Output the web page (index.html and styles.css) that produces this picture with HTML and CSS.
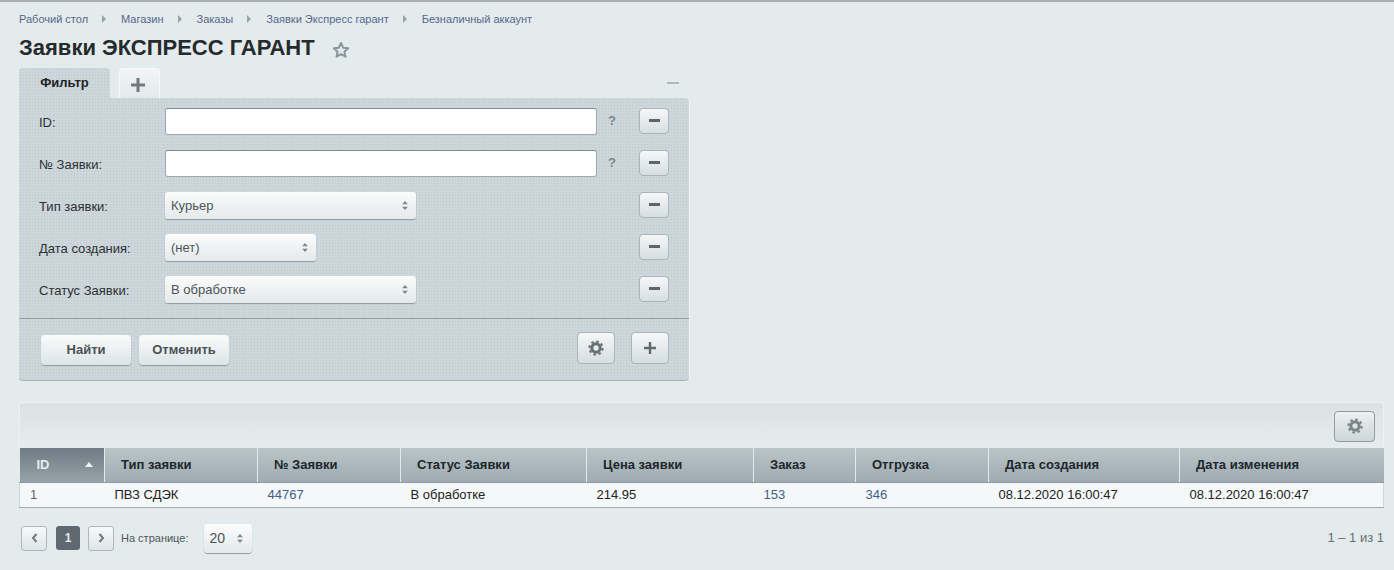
FILE: index.html
```html
<!DOCTYPE html>
<html lang="ru">
<head>
  <meta charset="UTF-8"/>
  <title>Заявки ЭКСПРЕСС ГАРАНТ</title>
  <link rel="stylesheet" href="styles.css">
</head>
<body>
  <nav class="crumbs">
    <a>Рабочий стол</a><i class="sep"></i>
    <a>Магазин</a><i class="sep"></i>
    <a>Заказы</a><i class="sep"></i>
    <a>Заявки Экспресс гарант</a><i class="sep"></i>
    <a>Безналичный аккаунт</a>
  </nav>

  <div class="title-row">
    <h1>Заявки ЭКСПРЕСС ГАРАНТ</h1>
    <svg class="star" width="18" height="18" viewBox="0 0 18 18"><path d="M9 2l2.1 4.7 5.1.6-3.8 3.4 1.1 5L9 13.2l-4.5 2.5 1.1-5-3.8-3.4 5.1-.6z" fill="none" stroke="#8a959c" stroke-width="2" stroke-linejoin="round"/></svg>
  </div>

  <section class="filter">
    <div class="tabs">
      <div class="tab tab-active">Фильтр</div>
      <div class="tab tab-add"><svg width="14" height="14" viewBox="0 0 14 14"><path d="M7 0v14M0 7h14" stroke="#6d7a80" stroke-width="3"/></svg></div>
      <div class="collapse"></div>
    </div>
    <div class="panel">
      <div class="rows">
        <div class="row">
          <label>ID:</label>
          <input class="text" type="text">
          <span class="hint">?</span>
          <button class="square"><b class="dash"></b></button>
        </div>
        <div class="row">
          <label>№ Заявки:</label>
          <input class="text" type="text">
          <span class="hint">?</span>
          <button class="square"><b class="dash"></b></button>
        </div>
        <div class="row">
          <label>Тип заявки:</label>
          <div class="select w-wide"><span>Курьер</span><svg width="6" height="9" viewBox="0 0 7 11"><path d="M3.5 0L7 4H0zM3.5 11L0 7h7z" fill="#7d878c"/></svg></div>
          <button class="square push"><b class="dash"></b></button>
        </div>
        <div class="row">
          <label>Дата создания:</label>
          <div class="select w-mid"><span>(нет)</span><svg width="6" height="9" viewBox="0 0 7 11"><path d="M3.5 0L7 4H0zM3.5 11L0 7h7z" fill="#7d878c"/></svg></div>
          <button class="square push"><b class="dash"></b></button>
        </div>
        <div class="row">
          <label>Статус Заявки:</label>
          <div class="select w-wide"><span>В обработке</span><svg width="6" height="9" viewBox="0 0 7 11"><path d="M3.5 0L7 4H0zM3.5 11L0 7h7z" fill="#7d878c"/></svg></div>
          <button class="square push"><b class="dash"></b></button>
        </div>
      </div>
      <div class="actions">
        <button class="btn btn-find">Найти</button>
        <button class="btn btn-cancel">Отменить</button>
        <button class="icon-btn push">
          <svg width="16" height="16" viewBox="0 0 16 16"><circle cx="8" cy="8" r="4.2" fill="none" stroke="#666f74" stroke-width="3"/><circle cx="8" cy="8" r="6.6" fill="none" stroke="#666f74" stroke-width="2" stroke-dasharray="2.6 2.58"/></svg>
        </button>
        <button class="icon-btn">
          <svg width="14" height="14" viewBox="0 0 14 14"><path d="M7 1v12M1 7h12" stroke="#5f6a70" stroke-width="2.4"/></svg>
        </button>
      </div>
    </div>
  </section>

  <section class="grid">
    <div class="toolbar">
      <button class="icon-btn gear-wide">
        <svg width="16" height="16" viewBox="0 0 16 16"><circle cx="8" cy="8" r="4.2" fill="none" stroke="#7a8388" stroke-width="3"/><circle cx="8" cy="8" r="6.6" fill="none" stroke="#7a8388" stroke-width="2" stroke-dasharray="2.6 2.58"/></svg>
      </button>
    </div>
    <table>
      <colgroup>
        <col class="c1"><col class="c2"><col class="c3"><col class="c4"><col class="c5"><col class="c6"><col class="c7"><col class="c8"><col>
      </colgroup>
      <thead>
        <tr>
          <th class="sorted"><div class="sort-cell"><span>ID</span><i class="arrow"></i></div></th>
          <th>Тип заявки</th>
          <th>№ Заявки</th>
          <th>Статус Заявки</th>
          <th>Цена заявки</th>
          <th>Заказ</th>
          <th>Отгрузка</th>
          <th>Дата создания</th>
          <th>Дата изменения</th>
        </tr>
      </thead>
      <tbody>
        <tr>
          <td class="num">1</td>
          <td>ПВЗ СДЭК</td>
          <td><a>44767</a></td>
          <td>В обработке</td>
          <td>214.95</td>
          <td><a>153</a></td>
          <td><a>346</a></td>
          <td>08.12.2020 16:00:47</td>
          <td>08.12.2020 16:00:47</td>
        </tr>
      </tbody>
    </table>
  </section>

  <footer class="pager">
    <button class="page-btn"><svg width="7" height="10" viewBox="0 0 7 10"><path d="M5.5 1L2 5l3.5 4" fill="none" stroke="#6f7a80" stroke-width="2"/></svg></button>
    <span class="page-cur">1</span>
    <button class="page-btn"><svg width="7" height="10" viewBox="0 0 7 10"><path d="M1.5 1L5 5 1.5 9" fill="none" stroke="#6f7a80" stroke-width="2"/></svg></button>
    <span class="per-label">На странице:</span>
    <div class="select per-select"><span>20</span><svg width="6" height="9" viewBox="0 0 7 11"><path d="M3.5 0L7 4H0zM3.5 11L0 7h7z" fill="#7d878c"/></svg></div>
    <span class="total">1 – 1 из 1</span>
  </footer>
</body>
</html>
```

FILE: styles.css
```css
* { box-sizing:border-box; margin:0; padding:0 }
html, body { height:100% }
body {
  font-family:'Liberation Sans', Arial, sans-serif;
  font-size:13px; color:#222;
  background:#e4ebed;
  border-top:2px solid #a6aeb1;
  padding:0 10px 0 19px;
  overflow:hidden;
}
button { font-family:inherit; cursor:pointer }

.crumbs { display:flex; align-items:center; height:14px; margin-top:10px; font-size:11px; color:#54688c; white-space:nowrap }
.sep { width:0; height:0; margin:0 15px 0 14px; border-left:4px solid #97a2a8; border-top:4px solid transparent; border-bottom:4px solid transparent }

.title-row { display:flex; align-items:center; gap:17px; height:28px; margin-top:8px }
h1 { font-size:22px; line-height:28px; font-weight:bold; color:#252a2d }
.star { margin-top:3px }

.filter { width:670px; margin-top:6px }
.tabs { display:flex; height:30px; position:relative }
.tab { border-radius:4px 4px 0 0; display:flex; align-items:center; justify-content:center }
.tab-active {
  width:91px; font-size:13px; font-weight:bold; color:#222; padding-bottom:2px;
  background:#cdd6da radial-gradient(#bdc7cb 35%, transparent 40%) 0 0/3px 3px;
}
.tab-add {
  width:41px; margin-left:9px; padding:2px 3px 0 0;
  background:linear-gradient(#f2f5f6, #e3e9eb);
  border:1px solid #f6f8f9; border-bottom:none;
}
.collapse { width:12px; height:2px; background:#afb8bc; margin:14px 10px 0 auto; }

.panel {
  height:283px; border-radius:0 4px 4px 4px;
  background:#cdd6da radial-gradient(#bdc7cb 35%, transparent 40%) 0 0/3px 3px;
  border-bottom:1px solid #aab3b7;
  box-shadow:1px 0 0 #f0f4f5;
}
.rows { height:221px; padding-top:10px; border-bottom:1px solid #929da2 }
.row { display:flex; align-items:center; height:27px; margin-bottom:15px; padding:0 20px }
.row label { width:126px; padding-top:2px; font-size:13px; color:#2c3033 }
.text {
  width:432px; height:27px; background:#fff;
  border:1px solid #a0aaae; border-top-color:#7e8a90; border-radius:3px; outline:none;
}
.hint { width:42px; margin-top:-2px; text-align:right; padding-right:23px; font-size:13px; font-weight:bold; color:#7d888e }
.square {
  width:30px; height:26px; margin-top:-2px;
  display:flex; align-items:center; justify-content:center;
  background:linear-gradient(#f5f7f8, #d6dee1);
  border:1px solid #aab4b8; border-radius:4px;
}
.dash { display:block; width:11px; height:2.5px; background:#5b666c }
.push { margin-left:auto }

.select {
  display:flex; align-items:center; justify-content:space-between;
  height:27px; padding:0 8px 0 6px; font-size:13px; color:#4c5458;
  background:linear-gradient(#fbfcfc, #e4e9eb);
  border-radius:3px; box-shadow:0 1px 1px #8f9a9f;
}
.w-wide { width:251px }
.w-mid { width:151px }

.actions { display:flex; align-items:center; height:61px; padding:0 20px 0 22px }
.btn {
  width:90px; height:30px;
  font-size:13px; font-weight:bold; color:#4a5256;
  background:linear-gradient(#fafbfb, #dce4e7);
  border:none; border-radius:4px; box-shadow:0 1px 1px #8f9a9f;
}
.btn-cancel { margin-left:8px }
.icon-btn {
  width:38px; height:32px; margin-top:-3px;
  display:flex; align-items:center; justify-content:center;
  background:linear-gradient(#f5f7f8, #d6dee1);
  border:1px solid #aab4b8; border-radius:4px;
}
.icon-btn + .icon-btn { margin-left:16px }

.grid { width:1365px; margin-top:21px }
.toolbar {
  display:flex; justify-content:flex-end; align-items:center;
  height:46px; padding-right:8px;
  background:linear-gradient(#dbe2e4, #e6ecee);
  border:1px solid #eef2f3; border-bottom:none; border-radius:3px 3px 0 0;
}
.gear-wide { width:41px; height:31px; margin-top:1px; background:linear-gradient(#edf1f2, #ccd5d8); border-color:#8f9ba0 }

table { width:100%; border-collapse:collapse; table-layout:fixed }
.c1 { width:85px } .c2 { width:153px } .c3 { width:143px } .c4 { width:186px }
.c5 { width:167px } .c6 { width:102px } .c7 { width:133px } .c8 { width:191px }
th {
  height:34px; padding:0 0 0 16px; text-align:left;
  font-size:13px; font-weight:bold; color:#20262a;
  background:linear-gradient(#b9c4c8, #9eabb0);
  border-left:1px solid #e3e9eb;
  border-bottom:1px solid #8e9a9f;
}
th:first-child { border-left:none }
th.sorted { background:linear-gradient(#6f7b82, #97a3a9); color:#e7ecef; padding-left:0 }
.sort-cell { display:flex; align-items:center; justify-content:space-between; padding:0 11px 0 17px }
.arrow { width:0; height:0; border-left:4px solid transparent; border-right:4px solid transparent; border-bottom:5px solid #f0f4f5 }
td {
  height:25px; padding:0 0 1px 10px;
  font-size:13px; color:#222;
  background:#f5f8f9; border-bottom:1px solid #a2acb0;
}
td:first-child { border-left:1px solid #d0d7da }
td:last-child { border-right:1px solid #d0d7da }
td.num { color:#6d5a6e }
td a { color:#3d5f8a }

.pager { display:flex; align-items:center; width:1365px; height:29px; margin-top:16px; padding-left:2px }
.page-btn {
  width:26px; height:25px; display:flex; align-items:center; justify-content:center;
  background:linear-gradient(#f8fafa, #dde5e8);
  border:1px solid #aeb8bc; border-radius:3px;
}
.page-cur {
  width:24px; height:24px; margin:0 8px 0 9px; border-radius:3px;
  background:#5f6a70; color:#e6ebed; font-size:12px; font-weight:bold;
  display:flex; align-items:center; justify-content:center;
}
.per-label { margin-left:7px; font-size:11px; color:#4e575c }
.per-select { width:48px; height:29px; margin-left:16px; padding:0 9px 0 5px; font-size:14px; border-radius:4px }
.total { margin-left:auto; margin-top:-1px; font-size:13px; color:#676f73 }
```
